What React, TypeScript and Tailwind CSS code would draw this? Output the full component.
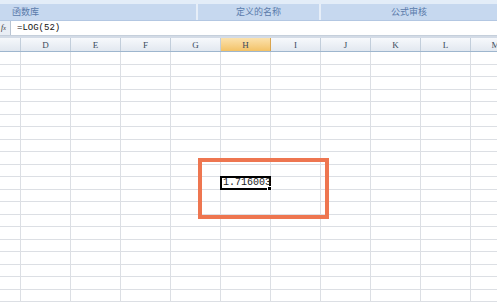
import React from 'react';

const cols = ['D', 'E', 'F', 'G', 'H', 'I', 'J', 'K', 'L', 'M'];
const rowHeights = Array.from({ length: 20 }, (_, i) => (i % 2 === 0 ? 'h-[13px]' : 'h-[12px]'));

function Ribbon() {
  return (
    <div className="h-[21px] bg-[#dbe7f5] flex flex-col">
      <div className="h-[4px] bg-[#e3edf8]" />
      <div className="flex h-[16px] text-[9px] leading-[16px] text-[#5a7bab]" style={{ fontFamily: '"Noto Sans CJK SC", sans-serif' }}>
        <div className="w-[198px] bg-[#c6d8ef] pl-[12px] border-r-2 border-[#e6eef8]">函数库</div>
        <div className="w-[123px] bg-[#c6d8ef] text-center border-r-2 border-[#e6eef8]">定义的名称</div>
        <div className="flex-1 bg-[#c6d8ef] text-center">公式审核</div>
      </div>
      <div className="h-[1px] bg-[#b3c7e2]" />
    </div>
  );
}

function FormulaBar() {
  return (
    <div className="flex flex-col">
      <div className="h-[15px] flex bg-white border-b border-[#c5cfdb]">
        <div className="w-[11px] bg-[#e9eef5] border-r border-[#b8c4d3] text-[8px] italic leading-[14px] pl-[1px] text-[#333]" style={{ fontFamily: '"Liberation Serif", serif' }}>
          f<span className="text-[6px]">x</span>
        </div>
        <div className="pl-[6px] text-[9px] leading-[15px] text-[#111]" style={{ fontFamily: '"Liberation Mono", monospace' }}>
          =LOG(52)
        </div>
      </div>
      <div className="h-[2px] bg-[#d3dbe6]" />
    </div>
  );
}

function Header() {
  return (
    <div className="flex h-[14px] border-b border-[#9eb6ce] text-[9px] leading-[14px] text-[#3a4a5c]" style={{ fontFamily: '"Liberation Serif", serif' }}>
      <div className="w-[21px] shrink-0 bg-gradient-to-b from-[#f5f8fb] to-[#e1e7ef] border-r border-[#c2cedb]" />
      {cols.map((c) => (
        <div
          key={c}
          className={
            c === 'H'
              ? 'w-[50px] shrink-0 text-center bg-gradient-to-b from-[#fbe2ad] to-[#f3c266] border-r border-[#d9a44e]'
              : 'w-[50px] shrink-0 text-center bg-gradient-to-b from-[#f7f9fc] to-[#e2e8f0] border-r border-[#c2cedb]'
          }
        >
          {c}
        </div>
      ))}
    </div>
  );
}

function Sheet() {
  return (
    <div className="flex flex-col">
      {rowHeights.map((h, r) => (
        <div key={r} className={`flex ${h} border-b border-[#dcdfe4]`}>
          <div className="w-[21px] shrink-0 border-r border-[#dcdfe4]" />
          {cols.map((c) => (
            <div key={c} className="relative w-[50px] shrink-0 border-r border-[#dcdfe4]">
              {c === 'H' && r === 10 && (
                <div className="absolute -left-[1px] -top-[1px] w-[51px] h-[14px] border-2 border-black bg-white">
                  <span className="block text-[10px] leading-[10px] pl-[1px] text-[#222]" style={{ fontFamily: '"Liberation Mono", monospace' }}>
                    1.716003
                  </span>
                  <div className="absolute -right-[3px] -bottom-[3px] w-[5px] h-[5px] bg-black border border-white" />
                </div>
              )}
            </div>
          ))}
        </div>
      ))}
    </div>
  );
}

export default function App() {
  return (
    <div className="relative w-[497px] h-[304px] overflow-hidden bg-white">
      <Ribbon />
      <FormulaBar />
      <Header />
      <Sheet />
      <div className="absolute left-[198px] top-[158px] w-[131px] h-[61px] border-4 border-[#ee7650]" />
    </div>
  );
}
